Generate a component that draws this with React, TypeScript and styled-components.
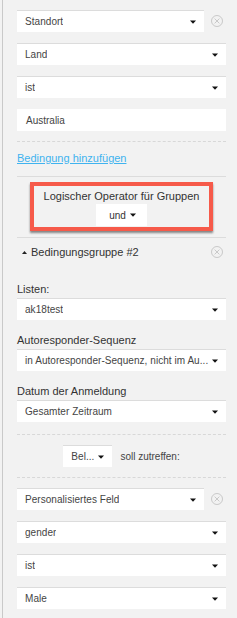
import styled, { createGlobalStyle } from 'styled-components';

const GlobalStyle = createGlobalStyle`
  html, body {
    margin: 0;
    padding: 0;
    background: #f2f2f2;
  }
  body {
    font-family: "Liberation Sans", Arial, sans-serif;
    color: #333;
  }
`;

const Page = styled.div`
  padding-left: 2px;
  min-height: 618px;
  box-sizing: border-box;
`;

const Panel = styled.div`
  border-left: 1px solid #c9c9c9;
  min-height: 618px;
  box-sizing: border-box;
  padding: 10px 11px 11px 14px;
  display: flex;
  flex-direction: column;
`;

const Row = styled.div<{ $mt?: number }>`
  display: flex;
  align-items: center;
  margin-top: ${(p) => p.$mt ?? 0}px;
`;

const SelectBox = styled.div<{ $compact?: boolean }>`
  box-sizing: border-box;
  height: 22px;
  background: #fff;
  border-top: 1px solid #dcdcdc;
  display: flex;
  align-items: center;
  justify-content: space-between;
  padding: 0 8px 0 8px;
  font-size: 10px;
  letter-spacing: 0.05px;
  color: #444;
  white-space: nowrap;
  flex: ${(p) => (p.$compact ? '0 0 auto' : '1 1 auto')};
  min-width: 0;
`;

const SelectText = styled.span`
  overflow: hidden;
  min-width: 0;
`;

const Input = styled.div`
  box-sizing: border-box;
  height: 22px;
  background: #fff;
  display: flex;
  align-items: center;
  padding: 0 9px;
  font-size: 10px;
  color: #444;
  flex: 1 1 auto;
`;

const CaretSvg = styled.svg`
  flex: 0 0 auto;
  margin-left: 4px;
`;

const Caret = () => (
  <CaretSvg width="6" height="4" viewBox="0 0 6 4">
    <path d="M0 0.5 H6 L3 3.8 Z" fill="#111" />
  </CaretSvg>
);

const RemoveSvg = styled.svg`
  flex: 0 0 auto;
  margin-left: 7px;
  margin-right: 3px;
`;

const Remove = () => (
  <RemoveSvg width="12" height="12" viewBox="0 0 12 12">
    <circle cx="6" cy="6" r="5.5" fill="none" stroke="#c4c4c4" strokeWidth="0.9" />
    <path d="M3.6 3.6 L8.4 8.4 M8.4 3.6 L3.6 8.4" stroke="#c4c4c4" strokeWidth="0.9" />
  </RemoveSvg>
);

const Select = ({ value, compact }: { value: string; compact?: boolean }) => (
  <SelectBox $compact={compact}>
    <SelectText>{value}</SelectText>
    <Caret />
  </SelectBox>
);

const Dashed = styled.div<{ $mt: number }>`
  margin-top: ${(p) => p.$mt}px;
  border-top: 1px dashed #d8d8d8;
`;

const Solid = styled.div<{ $mt: number }>`
  margin-top: ${(p) => p.$mt}px;
  border-top: 1px solid #dcdcdc;
`;

const AddLink = styled.a`
  margin-top: 9px;
  font-size: 11px;
  line-height: 14px;
  color: #3fb3ef;
  text-decoration: underline;
  align-self: flex-start;
  cursor: pointer;
`;

const OperatorBox = styled.div`
  margin: 5px auto 0;
  width: 183px;
  box-sizing: border-box;
  border: 4px solid #f65a4a;
  box-shadow: 0 2px 2px rgba(0, 0, 0, 0.45);
  padding: 3px 0 1px;
  display: flex;
  flex-direction: column;
  align-items: center;
`;

const OperatorLabel = styled.div`
  font-size: 11px;
  line-height: 14px;
  color: #333;
`;

const OperatorSelect = styled.div`
  margin-top: 1px;
  width: 51px;
  height: 22px;
  box-sizing: border-box;
  background: #fff;
  display: flex;
  align-items: center;
  justify-content: center;
  font-size: 10px;
  color: #333;
  padding-left: 2px;
`;

const GroupHeader = styled.div`
  margin-top: 6px;
  display: flex;
  align-items: center;
  padding-left: 5px;
  font-size: 11px;
  line-height: 16px;
  color: #333;
`;

const GroupTitle = styled.span`
  flex: 1 1 auto;
  margin-left: 4px;
`;

const Label = styled.div<{ $mt: number }>`
  margin-top: ${(p) => p.$mt}px;
  margin-bottom: 2px;
  font-size: 11px;
  line-height: 14px;
  color: #333;
`;

const MatchRow = styled.div`
  margin-top: 10px;
  display: flex;
  align-items: center;
  justify-content: center;
  gap: 8px;
  font-size: 10px;
  color: #444;
`;

export default function App() {
  return (
    <Page>
      <GlobalStyle />
      <Panel>
        <Row>
          <Select value="Standort" />
          <Remove />
        </Row>
        <Row $mt={11}>
          <Select value="Land" />
        </Row>
        <Row $mt={11}>
          <Select value="ist" />
        </Row>
        <Row $mt={11}>
          <Input>Australia</Input>
        </Row>
        <Dashed $mt={10} />
        <AddLink>Bedingung hinzufügen</AddLink>
        <Solid $mt={11} />
        <OperatorBox>
          <OperatorLabel>Logischer Operator für Gruppen</OperatorLabel>
          <OperatorSelect>
            und
            <Caret />
          </OperatorSelect>
        </OperatorBox>
        <Solid $mt={6} />
        <GroupHeader>
          <svg width="5" height="3" viewBox="0 0 5 3">
            <path d="M0 3 H5 L2.5 0 Z" fill="#222" />
          </svg>
          <GroupTitle>Bedingungsgruppe #2</GroupTitle>
          <Remove />
        </GroupHeader>
        <Label $mt={22}>Listen:</Label>
        <Row>
          <Select value="ak18test" />
        </Row>
        <Label $mt={13}>Autoresponder-Sequenz</Label>
        <Row>
          <Select value="in Autoresponder-Sequenz, nicht im Au..." />
        </Row>
        <Label $mt={13}>Datum der Anmeldung</Label>
        <Row>
          <Select value="Gesamter Zeitraum" />
        </Row>
        <Dashed $mt={12} />
        <MatchRow>
          <Select value="Bel..." compact />
          <span>soll zutreffen:</span>
        </MatchRow>
        <Dashed $mt={10} />
        <Row $mt={10}>
          <Select value="Personalisiertes Feld" />
          <Remove />
        </Row>
        <Row $mt={11}>
          <Select value="gender" />
        </Row>
        <Row $mt={11}>
          <Select value="ist" />
        </Row>
        <Row $mt={11}>
          <Select value="Male" />
        </Row>
      </Panel>
    </Page>
  );
}
